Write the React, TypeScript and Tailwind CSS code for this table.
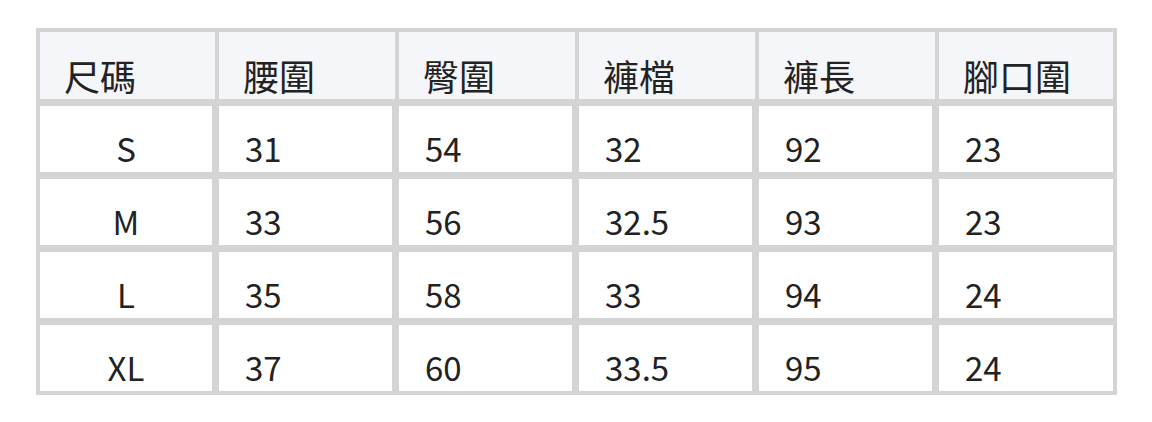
import React from "react";

const headers = ["尺碼", "腰圍", "臀圍", "褲檔", "褲長", "腳口圍"];
const rows = [
  ["S", "31", "54", "32", "92", "23"],
  ["M", "33", "56", "32.5", "93", "23"],
  ["L", "35", "58", "33", "94", "24"],
  ["XL", "37", "60", "33.5", "95", "24"],
];

const font = { fontFamily: '"Noto Sans CJK TC", "Noto Sans", sans-serif' };

export default function App() {
  return (
    <div className="w-[1152px] h-[422px] bg-white pt-[28px] pl-[36px]" style={font}>
      <div className="w-[1081px] bg-[#d4d4d4] p-[4px] flex flex-col gap-[7px] text-[#222222]">
        <div className="grid grid-cols-[175px_176px_176px_176px_176px_174px] gap-x-[4px]">
          {headers.map((h) => (
            <div key={h} className="h-[67px] bg-[#f5f6fa] pl-[24px] pt-[21px] text-[36px] leading-[44px]">
              {h}
            </div>
          ))}
        </div>
        {rows.map((r) => (
          <div key={r[0]} className="grid grid-cols-[172px_173px_173px_173px_173px_174px] gap-x-[7px]">
            {r.map((c, i) => (
              <div
                key={i}
                className={`h-[66px] bg-white pt-[20px] text-[33px] leading-[44px] ${i === 0 ? "text-center" : "pl-[26px]"}`}
              >
                {c}
              </div>
            ))}
          </div>
        ))}
      </div>
    </div>
  );
}
